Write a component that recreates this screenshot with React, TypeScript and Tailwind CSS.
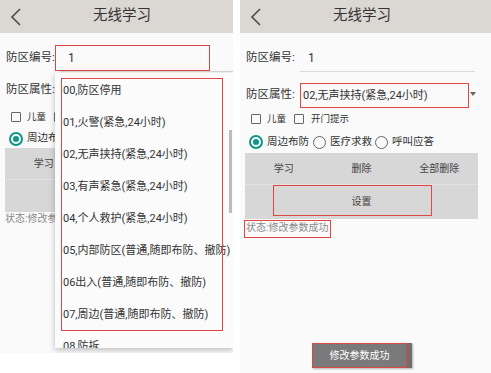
const items = [
  '00,防区停用',
  '01,火警(紧急,24小时)',
  '02,无声挟持(紧急,24小时)',
  '03,有声紧急(紧急,24小时)',
  '04,个人救护(紧急,24小时)',
  '05,内部防区(普通,随即布防、撤防)',
  '06出入(普通,随即布防、撤防)',
  '07,周边(普通,随即布防、撤防)',
  '08,防拆',
];

function Header() {
  return (
    <div className="h-[33px] bg-[#dbd8d3] grid grid-cols-[40px_1fr_47px] items-center">
      <svg width="14" height="18" viewBox="0 0 14 18" className="ml-[9px]">
        <path d="M11 1 L3 9 L11 17" fill="none" stroke="#4a4a4a" strokeWidth="1.6" />
      </svg>
      <div className="text-center text-[14.5px] text-[#333]">无线学习</div>
      <div />
    </div>
  );
}

function CheckBox() {
  return <span className="w-[10px] h-[10px] border-[1.5px] border-[#666] rounded-[1px] shrink-0" />;
}

function Radio({ checked }: { checked?: boolean }) {
  if (checked) {
    return (
      <span className="w-[14px] h-[14px] rounded-full border-2 border-[#0f9688] flex items-center justify-center shrink-0">
        <span className="w-[6px] h-[6px] rounded-full bg-[#0f9688]" />
      </span>
    );
  }
  return <span className="w-[13px] h-[13px] rounded-full border-[1.5px] border-[#666] shrink-0" />;
}

function Screen({ left }: { left?: boolean }) {
  return (
    <div className="relative w-[251px] h-full bg-[#fafafa] text-[#333]">
      <Header />

      {/* 防区编号 */}
      <div className="mt-[11px] h-[28px] flex items-center">
        <span className="pl-[6px] w-[60px] text-[11.5px]">防区编号:</span>
        <div className="w-[175px] h-full flex items-center border-b border-[#d9d9d9] pl-[8px] text-[12px]">1</div>
      </div>

      {/* 防区属性 */}
      <div className={left ? 'mt-[5px] h-[26px] flex items-center' : 'mt-[9px] h-[28px] flex items-center'}>
        <span className="pl-[6px] w-[60px] text-[11.5px]">防区属性:</span>
        {!left && (
          <div className="flex items-center">
            <div className="w-[169px] h-[25px] border-[1.5px] border-[#e04646] flex items-center pl-[2px] text-[11px] whitespace-nowrap">
              02,无声挟持(紧急,24小时)
            </div>
            <svg width="6" height="4" viewBox="0 0 6 4" className="ml-[1px] mb-[2px]">
              <polygon points="0,0 6,0 3,4" fill="#666" />
            </svg>
          </div>
        )}
      </div>

      {/* checkboxes */}
      <div className={left ? 'mt-[3px] h-[22px] flex items-center pl-[11px] text-[9.5px]' : 'h-[20px] flex items-center pl-[11px] text-[9.5px]'}>
        <CheckBox />
        <span className="ml-[6px]">儿童</span>
        <span className="ml-[8px] flex"><CheckBox /></span>
        <span className="ml-[7px]">开门提示</span>
      </div>

      {/* radios */}
      <div className={left ? 'mt-[1px] h-[19px] flex items-center pl-[9px] text-[10.5px]' : 'mt-[2px] h-[22px] flex items-center pl-[9px] text-[10.5px]'}>
        <Radio checked />
        <span className="ml-[4px]">周边布防</span>
        <span className="ml-[4px] flex"><Radio /></span>
        <span className="ml-[4px]">医疗求救</span>
        <span className="ml-[3px] flex"><Radio /></span>
        <span className="ml-[4px]">呼叫应答</span>
      </div>

      {/* buttons */}
      <div className="ml-[5px] w-[233px] bg-[#d7d7d7] text-[10px] text-[#444]">
        <div className="h-[32px] grid grid-cols-3 items-center text-center border-b border-[#e2e2e2]">
          <span>学习</span>
          <span>删除</span>
          <span>全部删除</span>
        </div>
        <div className={left ? 'h-[32px] flex items-center justify-center' : 'h-[34px] flex items-center justify-center'}>设置</div>
      </div>

      <div className={left ? 'h-[14px] flex items-center pl-[5px] text-[10px] text-[#8a8a8a]' : 'h-[17px] flex items-center pl-[6px] text-[10px] text-[#8a8a8a]'}>
        状态:修改参数成功
      </div>

      {left ? (
        <>
          <div className="absolute left-[55px] top-[45px] w-[155px] h-[26px] border-[1.5px] border-[#e04646]" />
          <div className="absolute left-[55px] top-[73px] w-[178px] h-[275px] bg-[#fbfbfb] shadow-[0_2px_6px_rgba(0,0,0,0.25)] overflow-hidden">
            <div className="pt-[1px]">
              {items.map(t => (
                <div key={t} className="h-[32px] flex items-center pl-[8px] text-[11px] text-[#333] whitespace-nowrap">{t}</div>
              ))}
            </div>
            <div className="absolute right-[1px] top-[57px] w-[3px] h-[83px] bg-[#bdbdbd]" />
            <div className="absolute left-[6px] top-[5px] w-[162px] h-[253px] border-[1.5px] border-[#e04646]" />
          </div>
        </>
      ) : (
        <>
          <div className="absolute left-[33px] top-[185px] w-[159px] h-[31px] border-[1.5px] border-[#e04646]" />
          <div className="absolute left-[4px] top-[220px] w-[87px] h-[18px] border-[1.5px] border-[#e04646]" />
          <div className="absolute left-[72px] top-[343px] w-[100px] h-[25px] bg-[#6f6f6f] shadow-[1px_1px_2px_rgba(0,0,0,0.3)]">
            <div className="w-[95px] h-full border-[1.5px] border-[#e04646] bg-[#7a7a7a] flex items-center justify-center text-[10px] text-white">
              修改参数成功
            </div>
          </div>
        </>
      )}
    </div>
  );
}

export default function App() {
  return (
    <div className="flex w-[491px] h-[373px] bg-white font-['Roboto','Noto_Sans_CJK_SC',sans-serif] leading-none">
      <div className="w-[233px] h-[353px] overflow-hidden shrink-0">
        <Screen left />
      </div>
      <div className="w-[7px] shrink-0" />
      <div className="w-[251px] h-[373px] shrink-0">
        <Screen />
      </div>
    </div>
  );
}
